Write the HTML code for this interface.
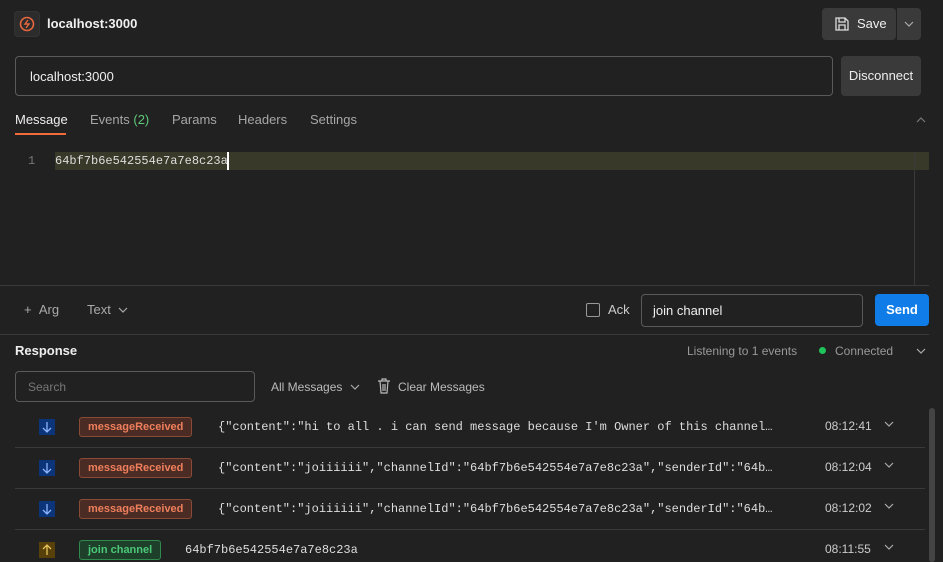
<!DOCTYPE html>
<html><head><style>
*{box-sizing:border-box;margin:0;padding:0}
html,body{width:943px;height:562px;overflow:hidden}
body{background:#212121;font-family:"Liberation Sans",sans-serif;color:#e6e6e6;position:relative;font-size:13px}
.a{position:absolute}
.mono{font-family:"Liberation Mono",monospace}
.tab{position:absolute;top:112px;font-size:13px;color:#a6a6a6}
.row{position:absolute;left:15px;width:910px;height:41px;border-bottom:1px solid #3a3a3a}
.arr{position:absolute;left:24px;top:12px;width:16px;height:16px;background:#0c3478}
.tag{position:absolute;left:64px;top:10px;height:20px;border-radius:3px;border:1px solid #8a4a36;background:#4a2c24;color:#ef7f5c;font-size:11px;font-weight:bold;line-height:18px;padding:0 8px}
.msg{position:absolute;left:203px;top:13px;font-size:12px;color:#ddd;white-space:nowrap}
.tm{position:absolute;left:810px;top:12px;color:#ccc;font-size:12px}
.chev{position:absolute;left:869px;top:14px}
</style></head><body>
<svg width="0" height="0" style="position:absolute"><defs>
<symbol id="cd" viewBox="0 0 10 6"><path d="M1 1l4 4 4-4" fill="none" stroke="#aaa" stroke-width="1.2"/></symbol>
<symbol id="dn" viewBox="0 0 16 16"><path d="M8 3v10M4 9l4 4 4-4" fill="none" stroke="#8ab4ff" stroke-width="1.3"/></symbol>
<symbol id="up" viewBox="0 0 16 16"><path d="M8 13V3M4 7l4-4 4 4" fill="none" stroke="#e8c35a" stroke-width="1.3"/></symbol>
</defs></svg>
<div class="a" style="left:14px;top:11px;width:26px;height:26px;border-radius:4px;background:#2c2c2c;border:1px solid #333">
<svg width="24" height="24" viewBox="0 0 24 24"><circle cx="12" cy="12" r="6.5" fill="none" stroke="#e8673f" stroke-width="1.6"/><path d="M13 8l-3 4h4l-3 4" fill="none" stroke="#e8673f" stroke-width="1.4"/></svg></div>
<div class="a" style="left:47px;top:16px;font-weight:bold;font-size:13px;color:#f0f0f0">localhost:3000</div>
<div class="a" style="left:822px;top:8px;width:74px;height:32px;background:#3a3a3a;border-radius:4px;color:#eee;font-size:13px;line-height:32px;padding-left:35px">Save
<svg class="a" style="left:12px;top:8px" width="16" height="16" viewBox="0 0 16 16"><path d="M2 2h9l3 3v9H2z M5 2v4h6V2 M5 14v-5h6v5" fill="none" stroke="#ddd" stroke-width="1.3"/></svg></div>
<div class="a" style="left:897px;top:8px;width:24px;height:32px;background:#3a3a3a;border-radius:0 4px 4px 0"><svg class="a" style="left:7px;top:13px" width="10" height="6"><use href="#cd"/></svg></div>
<div class="a" style="left:15px;top:56px;width:818px;height:40px;border:1px solid #5a5a5a;border-radius:4px;padding:12px 14px;font-size:13px;color:#eee">localhost:3000</div>
<div class="a" style="left:841px;top:56px;width:80px;height:40px;background:#3a3a3a;border-radius:4px;text-align:center;line-height:40px;font-size:13px;color:#eee">Disconnect</div>
<div class="tab" style="left:15px;color:#eee">Message</div>
<div class="a" style="left:15px;top:133px;width:51px;height:2px;background:#f26b3a"></div>
<div class="tab" style="left:90px">Events <span style="color:#5fc87a">(2)</span></div>
<div class="tab" style="left:172px">Params</div>
<div class="tab" style="left:238px">Headers</div>
<div class="tab" style="left:310px">Settings</div>
<svg class="a" style="left:916px;top:117px" width="10" height="6"><path d="M1 5l4-4 4 4" fill="none" stroke="#777" stroke-width="1.2"/></svg>
<div class="a" style="left:55px;top:152px;width:874px;height:18px;background:#393929"></div>
<div class="a mono" style="left:28px;top:154px;font-size:12px;color:#777">1</div>
<div class="a mono" style="left:55px;top:154px;font-size:12px;color:#ddd">64bf7b6e542554e7a7e8c23a</div>
<div class="a" style="left:227px;top:152px;width:2px;height:18px;background:#fff"></div>
<div class="a" style="left:914px;top:152px;width:1px;height:133px;background:#3a3a3a"></div>
<div class="a" style="left:0;top:285px;width:929px;height:1px;background:#3a3a3a"></div>
<div class="a" style="left:24px;top:302px;color:#aaa;font-size:13px">+ &nbsp;Arg</div>
<div class="a" style="left:87px;top:302px;color:#aaa;font-size:13px">Text</div>
<svg class="a" style="left:118px;top:307px" width="10" height="6"><use href="#cd"/></svg>
<div class="a" style="left:586px;top:303px;width:14px;height:14px;border:1px solid #999;border-radius:2px"></div>
<div class="a" style="left:608px;top:302px;color:#ccc;font-size:13px">Ack</div>
<div class="a" style="left:641px;top:294px;width:222px;height:33px;border:1px solid #5a5a5a;border-radius:4px;padding:8px 11px;font-size:13px;color:#eee">join channel</div>
<div class="a" style="left:875px;top:294px;width:54px;height:32px;background:#0f7ce8;border-radius:4px;text-align:center;line-height:32px;font-weight:bold;color:#fff">Send</div>
<div class="a" style="left:0;top:334px;width:929px;height:1px;background:#3a3a3a"></div>
<div class="a" style="left:15px;top:343px;font-weight:bold;color:#eee;font-size:13px">Response</div>
<div class="a" style="left:687px;top:344px;color:#999;font-size:12px">Listening to 1 events</div>
<div class="a" style="left:819px;top:347px;width:7px;height:7px;border-radius:50%;background:#1ec45a"></div>
<div class="a" style="left:835px;top:344px;color:#999;font-size:12px">Connected</div>
<svg class="a" style="left:916px;top:348px" width="10" height="6"><use href="#cd"/></svg>
<div class="a" style="left:15px;top:371px;width:240px;height:31px;border:1px solid #5a5a5a;border-radius:4px;padding:8px 12px;color:#777;font-size:12px">Search</div>
<div class="a" style="left:271px;top:380px;color:#bbb;font-size:12px">All Messages</div>
<svg class="a" style="left:350px;top:384px" width="10" height="6"><use href="#cd"/></svg>
<svg class="a" style="left:377px;top:378px" width="14" height="16" viewBox="0 0 14 16"><path d="M1 3h12M5 3V1h4v2M3 3l1 12h6l1-12M6 6v7M8 6v7" fill="none" stroke="#bbb" stroke-width="1.2"/></svg>
<div class="a" style="left:398px;top:380px;color:#bbb;font-size:12px">Clear Messages</div>
<div class="a" style="left:929px;top:408px;width:6px;height:154px;background:#444;border-radius:3px"></div>
<div class="row" style="top:407px"><svg class="arr"><use href="#dn"/></svg><div class="tag">messageReceived</div><div class="msg mono">{"content":"hi to all . i can send message because I'm Owner of this channel…</div><div class="tm">08:12:41</div><svg class="chev" width="10" height="6"><use href="#cd"/></svg></div>
<div class="row" style="top:448px"><svg class="arr"><use href="#dn"/></svg><div class="tag">messageReceived</div><div class="msg mono">{"content":"joiiiiii","channelId":"64bf7b6e542554e7a7e8c23a","senderId":"64b…</div><div class="tm">08:12:04</div><svg class="chev" width="10" height="6"><use href="#cd"/></svg></div>
<div class="row" style="top:489px"><svg class="arr"><use href="#dn"/></svg><div class="tag">messageReceived</div><div class="msg mono">{"content":"joiiiiii","channelId":"64bf7b6e542554e7a7e8c23a","senderId":"64b…</div><div class="tm">08:12:02</div><svg class="chev" width="10" height="6"><use href="#cd"/></svg></div>
<div class="row" style="top:530px;border:none"><svg class="arr" style="background:#574009"><use href="#up"/></svg><div class="tag" style="border-color:#2f8a4d;background:#1e3f2a;color:#4cc879">join channel</div><div class="msg mono" style="left:170px">64bf7b6e542554e7a7e8c23a</div><div class="tm">08:11:55</div><svg class="chev" width="10" height="6"><use href="#cd"/></svg></div>
</body></html>
